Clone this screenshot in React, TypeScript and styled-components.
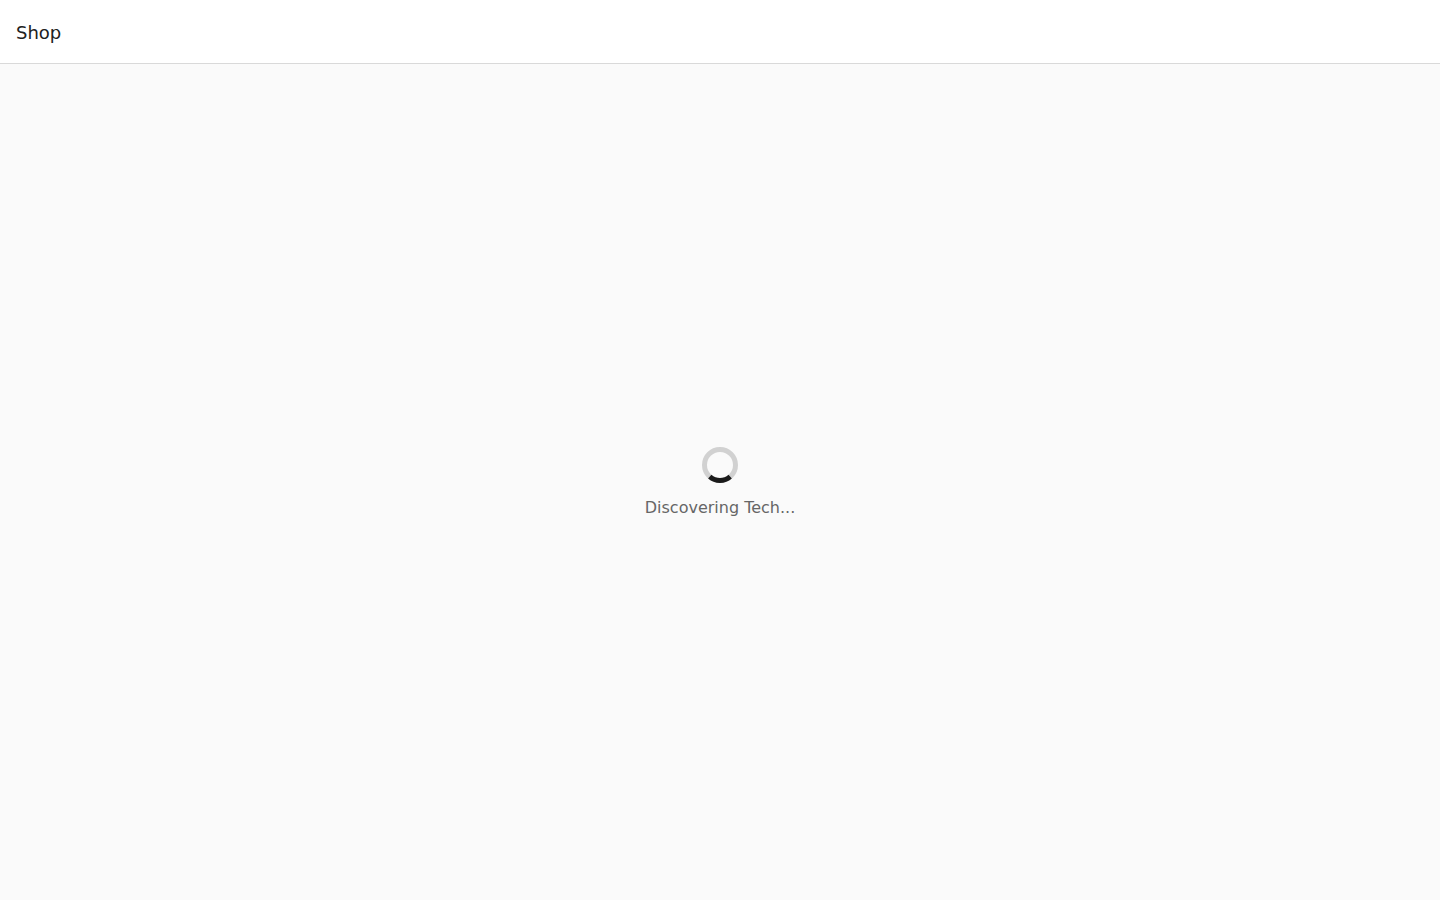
import React from "react";
import styled, { createGlobalStyle } from "styled-components";

const GlobalStyle = createGlobalStyle`
  *, *::before, *::after { box-sizing: border-box; }
  body {
    margin: 0;
    background: #fafafa;
    color: #212121;
    font-family: "DejaVu Sans", sans-serif;
  }
`;

const Page = styled.div`
  min-height: 100vh;
  display: flex;
  flex-direction: column;
`;

const Header = styled.header`
  padding: 22px 16px 20px;
  background: #fff;
  border-bottom: 1px solid #d9d9d9;
`;

const Title = styled.h1`
  margin: 0;
  font-size: 18px;
  font-weight: 400;
  line-height: 21px;
`;

const Main = styled.main`
  flex: 1;
  display: flex;
  flex-direction: column;
  align-items: center;
  justify-content: center;
  gap: 16px;
`;

const SpinnerIcon = styled.svg`
  display: block;
  width: 36px;
  height: 36px;
  fill: none;
  stroke-width: 5px;
`;

const Message = styled.p`
  margin: 0;
  font-size: 16px;
  line-height: 18px;
  color: #666;
`;

function Spinner() {
  return (
    <SpinnerIcon viewBox="0 0 36 36" aria-hidden="true">
      <circle cx="18" cy="18" r="15.5" stroke="#d1d1d1" />
      <circle
        cx="18"
        cy="18"
        r="15.5"
        stroke="#1a1a1a"
        pathLength="360"
        strokeDasharray="82 278"
        transform="rotate(49 18 18)"
      />
    </SpinnerIcon>
  );
}

export default function App() {
  return (
    <Page>
      <GlobalStyle />
      <Header>
        <Title>Shop</Title>
      </Header>
      <Main role="status">
        <Spinner />
        <Message>Discovering Tech...</Message>
      </Main>
    </Page>
  );
}
